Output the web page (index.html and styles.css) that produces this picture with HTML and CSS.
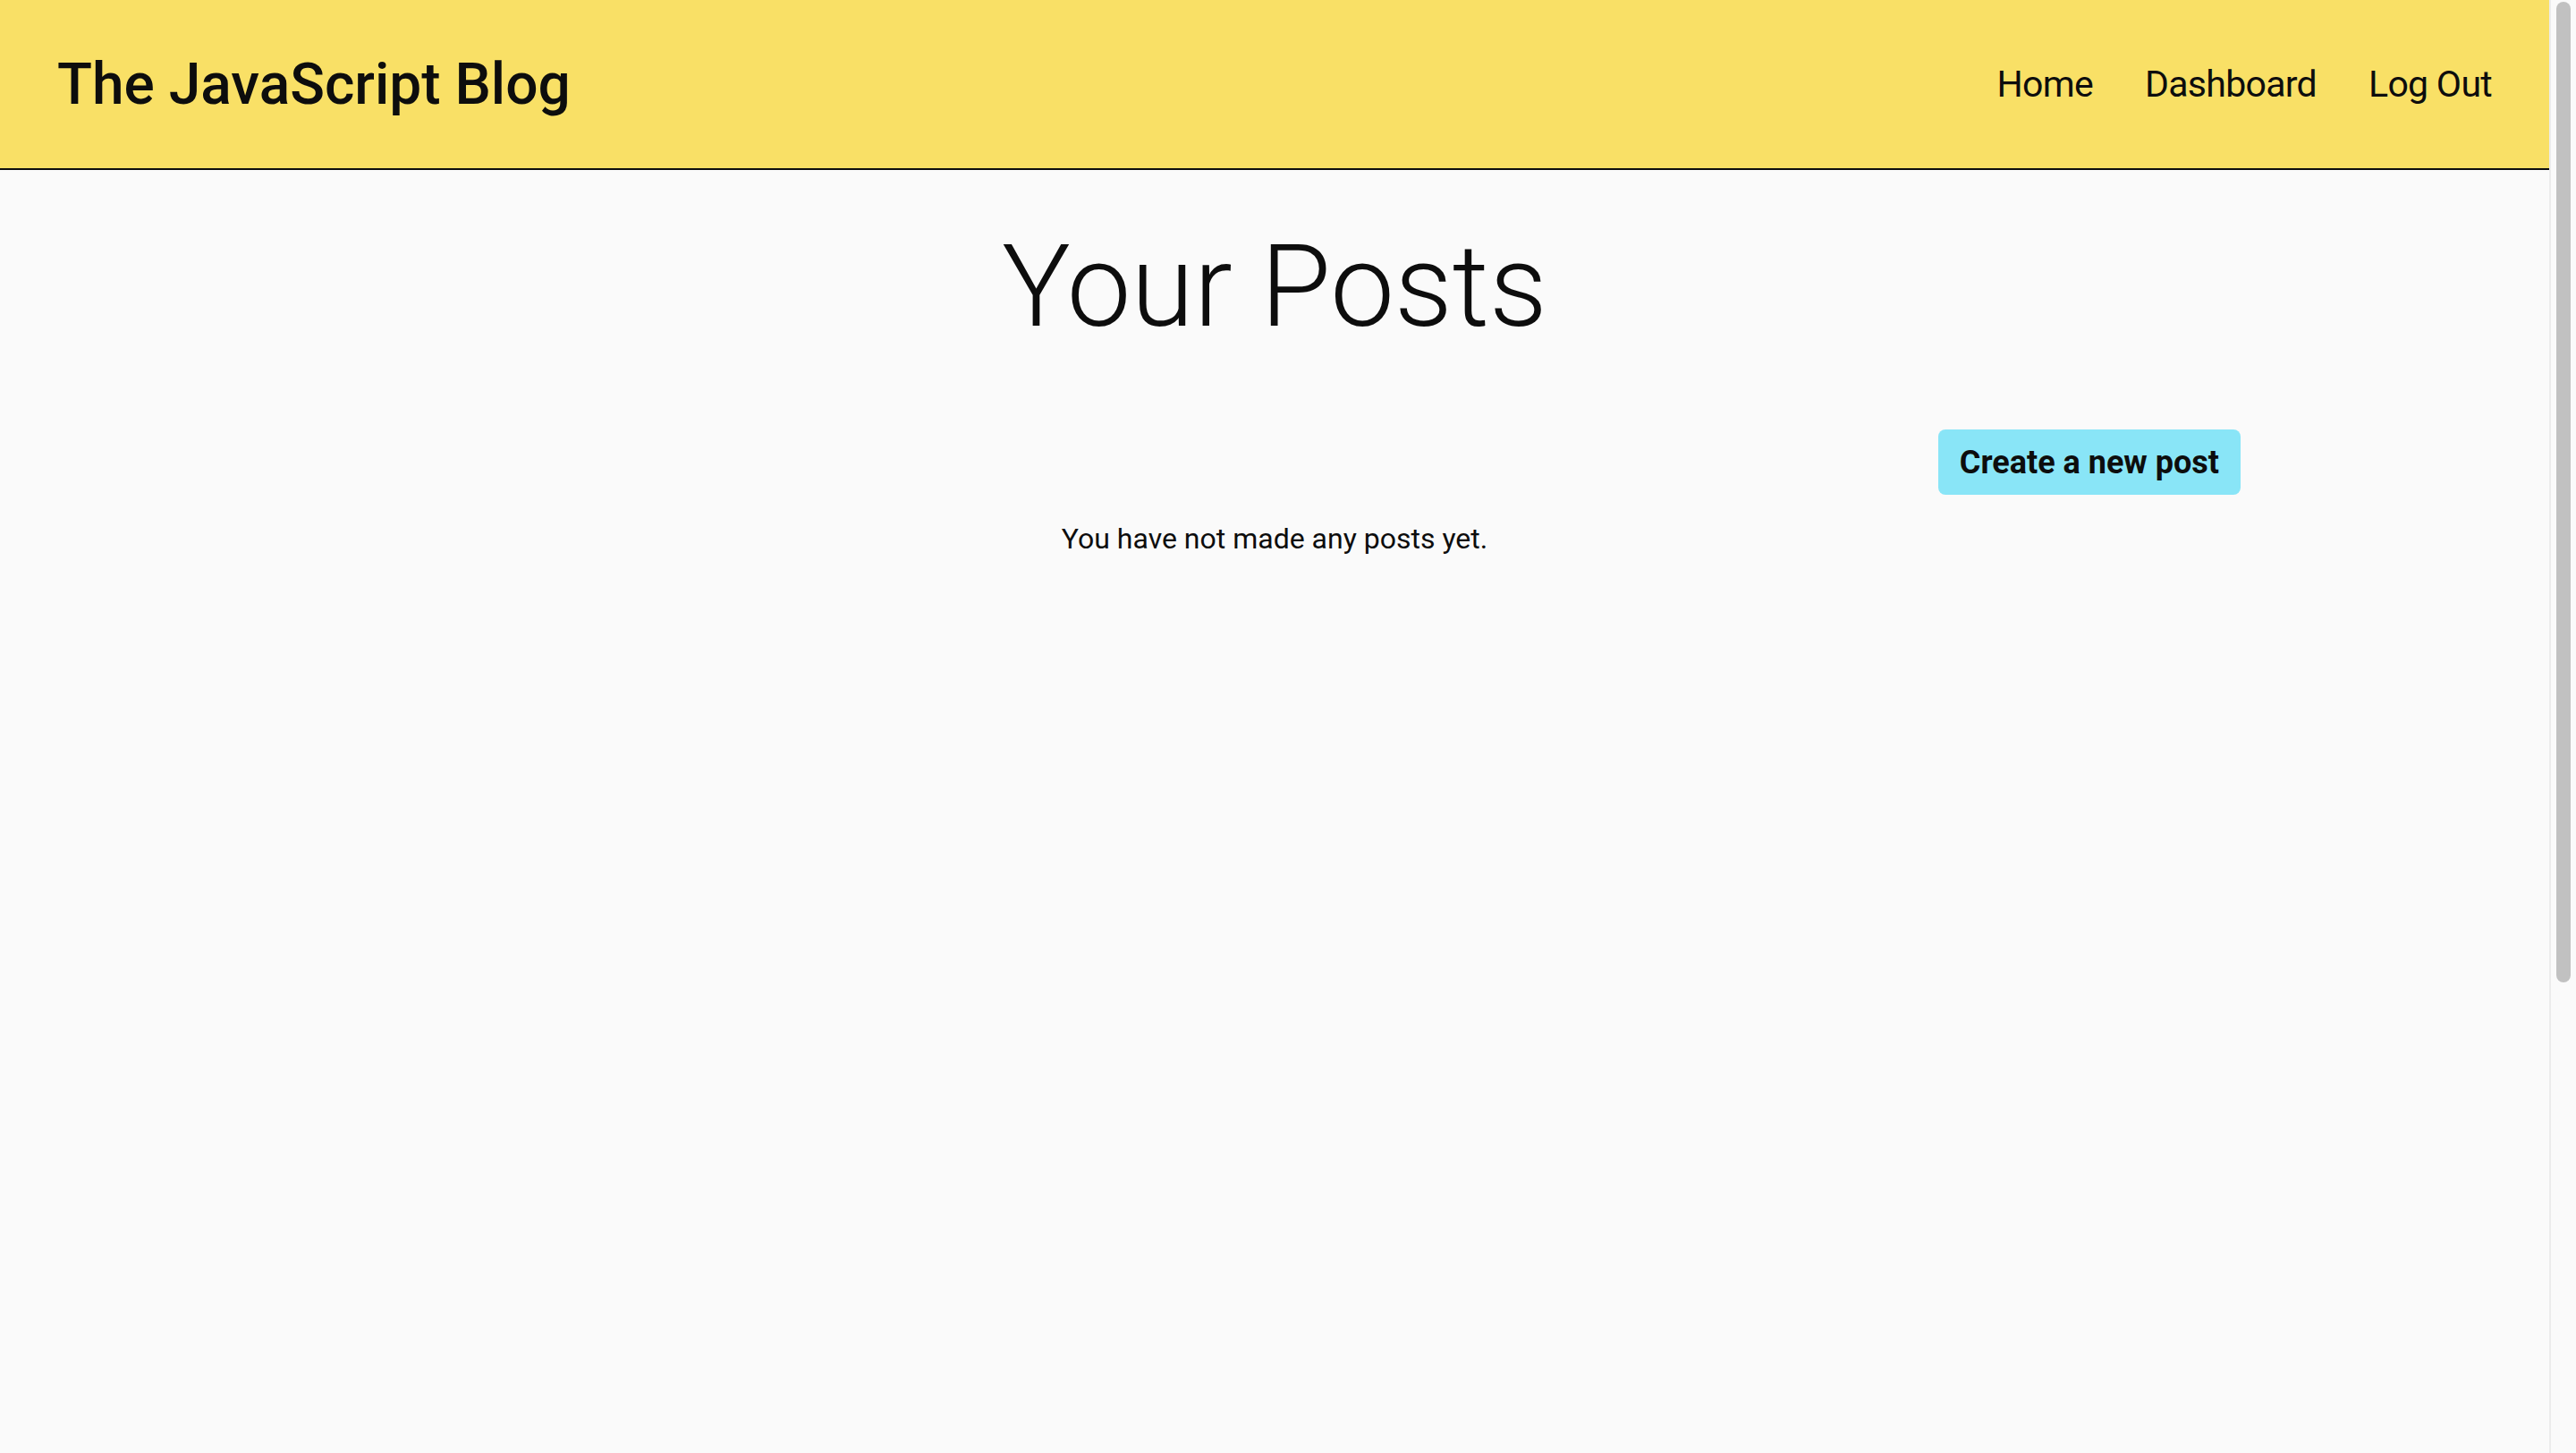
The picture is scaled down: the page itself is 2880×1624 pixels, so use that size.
FILE: index.html
```html
<!DOCTYPE html>
<html lang="en">
<head>
<meta charset="utf-8">
<title>The JavaScript Blog</title>
<link rel="stylesheet" href="styles.css">
</head>
<body>
<div class="window">
  <div class="page">
    <header class="site-header">
      <div class="brand">The JavaScript Blog</div>
      <nav class="nav">
        <a href="#" class="nav-link">Home</a>
        <a href="#" class="nav-link">Dashboard</a>
        <a href="#" class="nav-link">Log Out</a>
      </nav>
    </header>
    <main class="content">
      <h1 class="page-title">Your Posts</h1>
      <div class="actions">
        <button class="btn-create">Create a new post</button>
      </div>
      <p class="empty">You have not made any posts yet.</p>
    </main>
  </div>
  <div class="scrollbar"><div class="thumb"></div></div>
</div>
</body>
</html>
```

FILE: styles.css
```css
html, body {
  margin: 0;
  padding: 0;
}
body {
  background: #fafafa;
  font-family: Roboto, "Liberation Sans", sans-serif;
  color: #0d0d0d;
}
.window {
  display: flex;
  height: 1624px;
  overflow: hidden;
}
.page {
  flex: 1;
  min-width: 0;
}
.site-header {
  height: 188px;
  background: #f9e066;
  border-bottom: 2px solid #0d0d0d;
  display: flex;
  align-items: center;
  justify-content: space-between;
  padding: 0 64px;
}
.brand {
  font-size: 64px;
  font-weight: 500;
}
.nav {
  display: flex;
  gap: 58px;
}
.nav-link {
  font-size: 41px;
  letter-spacing: -0.7px;
  color: #0d0d0d;
  text-decoration: none;
}
.content {
  width: 2160px;
  margin: 0 auto;
  text-align: center;
}
.page-title {
  font-size: 128px;
  font-weight: 300;
  margin: 55px 0 0;
}
.actions {
  display: flex;
  justify-content: flex-end;
  margin-top: 85px;
}
.btn-create {
  background: #89e5f7;
  border: none;
  border-radius: 8px;
  font-family: Roboto, "Liberation Sans", sans-serif;
  font-weight: 700;
  font-size: 36px;
  color: #0d0d0d;
  padding: 16px 24px 15px;
}
.empty {
  font-size: 32px;
  margin: 30px 0 0;
}
.scrollbar {
  width: 16px;
  flex: none;
  border-left: 2px solid #ececec;
  background: #fafafa;
  padding: 2px 6px 0 6px;
}
.thumb {
  height: 1096px;
  background: #c1c1c1;
  border-radius: 8px;
}
```
